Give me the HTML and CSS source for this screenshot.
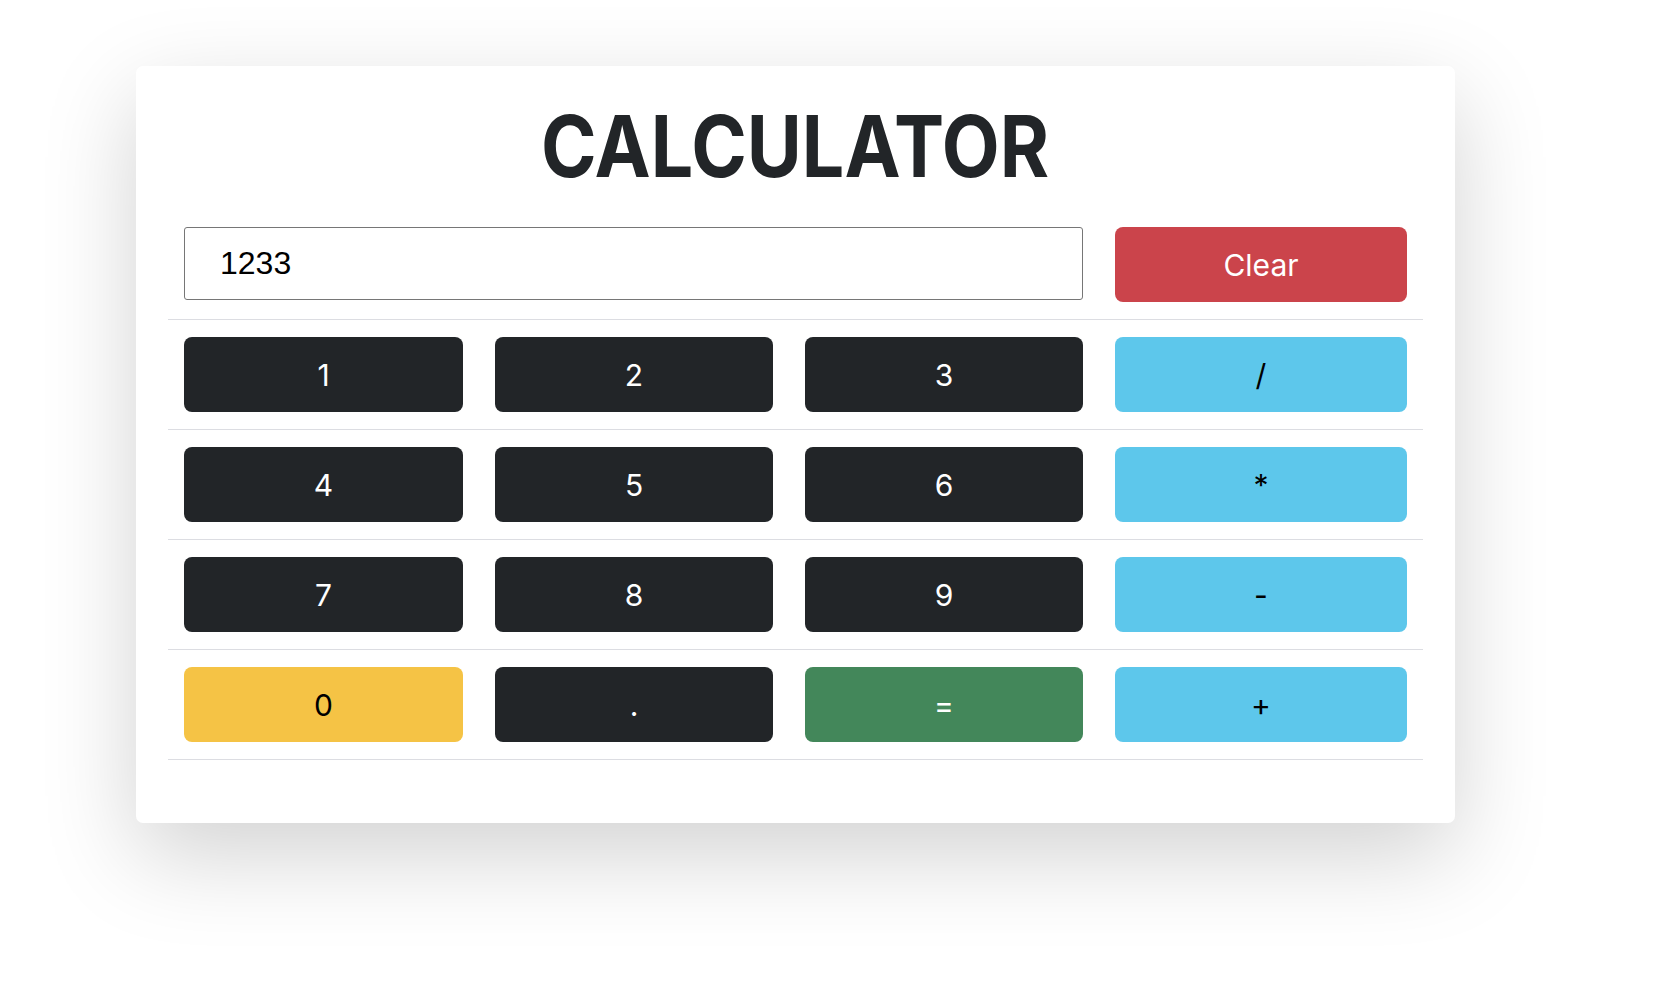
FILE: index.html
```html
<!DOCTYPE html>
<html lang="en">
<head>
<meta charset="utf-8">
<title>Calculator</title>
<link rel="stylesheet" href="styles.css">
</head>
<body>
<div class="card">
  <h1 class="title"><span class="title-text">CALCULATOR</span></h1>
  <div class="row">
    <div class="cell span3"><input class="display" type="text" value="1233"></div>
    <div class="cell"><button class="btn danger">Clear</button></div>
  </div>
  <div class="row">
    <div class="cell"><button class="btn dark">1</button></div>
    <div class="cell"><button class="btn dark">2</button></div>
    <div class="cell"><button class="btn dark">3</button></div>
    <div class="cell"><button class="btn info">/</button></div>
  </div>
  <div class="row">
    <div class="cell"><button class="btn dark">4</button></div>
    <div class="cell"><button class="btn dark">5</button></div>
    <div class="cell"><button class="btn dark">6</button></div>
    <div class="cell"><button class="btn info">*</button></div>
  </div>
  <div class="row">
    <div class="cell"><button class="btn dark">7</button></div>
    <div class="cell"><button class="btn dark">8</button></div>
    <div class="cell"><button class="btn dark">9</button></div>
    <div class="cell"><button class="btn info">-</button></div>
  </div>
  <div class="row">
    <div class="cell"><button class="btn warning">0</button></div>
    <div class="cell"><button class="btn dark">.</button></div>
    <div class="cell"><button class="btn success">=</button></div>
    <div class="cell"><button class="btn info">+</button></div>
  </div>
</div>
</body>
</html>
```
FILE: styles.css
```css
html, body {
  margin: 0;
  padding: 0;
  background: #ffffff;
}
body {
  font-family: Inter, "Liberation Sans", sans-serif;
  color: #212529;
  padding: 66px 0 0 136px;
  min-height: 986px;
  box-sizing: border-box;
}
.card {
  width: 1319px;
  box-sizing: border-box;
  padding: 37px 32px 63px;
  background: #ffffff;
  border-radius: 7px;
  box-shadow: 0 32px 95px rgba(0, 0, 0, 0.18);
}
.title {
  margin: 0 0 19px;
  font-family: Inter, "Liberation Sans", sans-serif;
  font-weight: 700;
  font-size: 85px;
  line-height: 88px;
  letter-spacing: 0;
  text-align: center;
  color: #222528;
}
.title-text {
  display: inline-block;
  transform: scaleX(0.885);
}
.row {
  display: grid;
  grid-template-columns: 311px 310px 310px 1fr;
  border-bottom: 1px solid #dcdde2;
}
.cell {
  padding: 17px 16px 17px;
  display: flex;
}
.span3 {
  grid-column: span 3;
}
.display {
  flex: 1;
  height: 73px;
  box-sizing: border-box;
  border: 1px solid #767676;
  border-radius: 3px;
  padding: 0 30px 0 35px;
  font-family: "Liberation Sans", Arial, sans-serif;
  font-size: 32px;
  color: #000;
  background: #fff;
  outline: none;
}
.btn {
  flex: 1;
  height: 75px;
  border: 0;
  border-radius: 8px;
  font-family: Inter, "Liberation Sans", sans-serif;
  font-size: 30px;
  font-weight: 400;
  cursor: pointer;
  padding: 0;
}
.dark { background: #222528; color: #ffffff; }
.info { background: #5dc7eb; color: #000000; }
.danger { background: #cb444b; color: #ffffff; }
.warning { background: #f5c345; color: #000000; }
.success { background: #43875a; color: #ffffff; }
```
